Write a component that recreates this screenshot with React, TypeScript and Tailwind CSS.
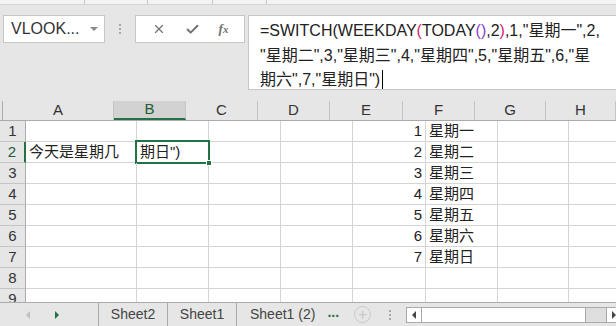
import { X, Check } from 'lucide-react';

const font = { fontFamily: '"Liberation Sans", "Noto Sans CJK SC", sans-serif' };

const cols = [
  { key: 'A', w: 'w-[111px]' },
  { key: 'B', w: 'w-[72px]' },
  { key: 'C', w: 'w-[72px]' },
  { key: 'D', w: 'w-[72px]' },
  { key: 'E', w: 'w-[73px]' },
  { key: 'F', w: 'w-[72px]' },
  { key: 'G', w: 'w-[71px]' },
  { key: 'H', w: 'w-[70px]' },
];

const days = ['星期一', '星期二', '星期三', '星期四', '星期五', '星期六', '星期日'];

function cellContent(row: number, col: string) {
  if (row === 2 && col === 'A') return <span className="pl-[3px]">今天是星期几</span>;
  if (row >= 1 && row <= 7 && col === 'E') return <span className="ml-auto pr-[3px]">{row}</span>;
  if (row >= 1 && row <= 7 && col === 'F') return <span className="pl-[3px]">{days[row - 1]}</span>;
  return null;
}

export default function App() {
  const rows = [1, 2, 3, 4, 5, 6, 7, 8, 9];
  return (
    <div className="w-[616px] h-[326px] overflow-hidden bg-[#e6e6e6] flex flex-col text-[#222]" style={font}>
      {/* ribbon edge */}
      <div className="h-[5px] bg-[#f3f3f3] border-b border-[#d6d6d6] flex shrink-0">
        <div className="w-[85px] border-r border-[#c8c8c8]" />
        <div className="w-[63px] border-r border-[#c8c8c8]" />
        <div className="w-[65px] border-r border-[#c8c8c8]" />
        <div className="w-[54px] border-r border-[#c8c8c8]" />
      </div>

      {/* formula row */}
      <div className="flex items-start pt-[10px] shrink-0 h-[96px]">
        <div className="ml-[3px] w-[102px] h-[28px] bg-white border border-[#c6c6c6] flex items-center pl-[7px] pr-[6px]">
          <span className="text-[16px] text-[#333] flex-1">VLOOK...</span>
          <span className="w-0 h-0 border-l-[4px] border-r-[4px] border-t-[4px] border-l-transparent border-r-transparent border-t-[#8a8a8a]" />
        </div>
        <div className="w-[30px] h-[28px] flex flex-col items-center justify-center gap-[2px]">
          <span className="w-[2px] h-[2px] bg-[#a8a8a8]" />
          <span className="w-[2px] h-[2px] bg-[#a8a8a8]" />
          <span className="w-[2px] h-[2px] bg-[#a8a8a8]" />
        </div>
        <div className="w-[110px] h-[28px] bg-white border border-[#c6c6c6] flex items-center justify-around px-[6px] text-[#707070]">
          <X className="w-[14px] h-[14px]" strokeWidth={2} />
          <Check className="w-[15px] h-[15px]" strokeWidth={3} />
          <span className="text-[13px] italic font-bold text-[#707070]" style={{ fontFamily: '"Liberation Serif", serif' }}>
            f<span className="text-[11px]">x</span>
          </span>
        </div>
        <div className="ml-[3px] flex-1 h-[75px] bg-white border border-[#c6c6c6] border-r-0 pl-[11px] pt-[3px] text-[16px] leading-[24.5px] text-[#222] whitespace-nowrap overflow-hidden">
          <div>
            =SWITCH(WEEKDAY<span className="text-[#d6246e]">(</span>TODAY<span className="text-[#8a3fc7]">()</span>,2<span className="text-[#d6246e]">)</span>,1,"星期一",2,
          </div>
          <div>"星期二",3,"星期三",4,"星期四",5,"星期五",6,"星</div>
          <div className="flex items-center">
            期六",7,"星期日")<span className="inline-block w-[1px] h-[20px] bg-black ml-[2px]" />
          </div>
        </div>
      </div>

      {/* grid */}
      <div className="flex-1 bg-white flex flex-col overflow-hidden">
        <div className="flex h-[20px] shrink-0 bg-[#e6e6e6] border-b border-[#ababab]">
          <div className="w-[26px] border-r border-[#ababab] relative overflow-hidden">
            <div className="absolute right-[3px] bottom-[3px] w-0 h-0" style={{ borderBottom: '13px solid #b6b6b6', borderLeft: '13px solid transparent' }} />
          </div>
          {cols.map(c => (
            <div
              key={c.key}
              className={`${c.w} shrink-0 flex items-center justify-center text-[15px] border-r ${
                c.key === 'B' ? 'bg-[#d2d2d2] border-b-2 border-b-[#217346] border-r-[#c4c4c4] text-[#1d5c38]' : 'border-[#c4c4c4] text-[#333]'
              }`}
            >
              {c.key}
            </div>
          ))}
        </div>
        {rows.map(r => (
          <div key={r} className="flex h-[21px] shrink-0">
            <div
              className={`w-[26px] shrink-0 bg-[#e6e6e6] border-b border-[#c4c4c4] flex items-center justify-center text-[15px] ${
                r === 2 ? 'bg-[#d2d2d2] border-r-2 border-r-[#217346] text-[#1d5c38]' : 'border-r border-r-[#ababab] text-[#333]'
              }`}
            >
              {r}
            </div>
            {cols.map(c => {
              const selected = r === 2 && c.key === 'B';
              return (
                <div
                  key={c.key}
                  className={`${c.w} shrink-0 flex items-center text-[15px] border-r border-b border-[#d4d4d4] relative whitespace-nowrap ${selected ? 'overflow-visible' : 'overflow-hidden'}`}
                >
                  {selected ? (
                    <>
                      <div className="absolute -left-[2px] -top-[2px] w-[75px] h-[24px] border-2 border-[#217346]" />
                      <div className="absolute -right-[4px] -bottom-[4px] w-[6px] h-[6px] bg-[#217346] border border-white z-10" />
                      <span className="pl-[3px]">期日")</span>
                    </>
                  ) : (
                    cellContent(r, c.key)
                  )}
                </div>
              );
            })}
          </div>
        ))}
      </div>

      {/* sheet tabs */}
      <div className="h-[24px] shrink-0 bg-[#e6e6e6] border-t border-[#ababab] flex items-center text-[14px] text-[#444]">
        <div className="w-[98px] h-full flex items-center">
          <span className="ml-[26px] w-0 h-0 border-t-[4px] border-b-[4px] border-r-[4px] border-t-transparent border-b-transparent border-r-[#c0c0c0]" />
          <span className="ml-[25px] w-0 h-0 border-t-[4px] border-b-[4px] border-l-[4px] border-t-transparent border-b-transparent border-l-[#217346]" />
        </div>
        <div className="w-[69px] h-full border-l border-[#a9a9a9] flex items-center justify-center">Sheet2</div>
        <div className="w-[69px] h-full border-l border-[#a9a9a9] flex items-center justify-center">Sheet1</div>
        <div className="h-full border-l border-[#a9a9a9] pl-[13px] pr-[12px] flex items-center">Sheet1 (2)</div>
        <span className="text-[#217346] font-bold text-[14px] -mt-[4px]">...</span>
        <div className="ml-[15px] w-[17px] h-[17px] rounded-full border border-[#c8c8c8] flex items-center justify-center text-[#c8c8c8] text-[16px] leading-none">+</div>
        <div className="ml-[18px] flex flex-col gap-[2px]">
          <span className="w-[2px] h-[2px] bg-[#a8a8a8]" />
          <span className="w-[2px] h-[2px] bg-[#a8a8a8]" />
          <span className="w-[2px] h-[2px] bg-[#a8a8a8]" />
        </div>
        <div className="ml-[15px] flex-1 h-[16px] flex bg-[#dedede] border border-[#a9a9a9] border-r-0">
          <div className="w-[15px] flex items-center justify-center bg-white border-r border-[#a9a9a9]">
            <span className="w-0 h-0 border-t-[4px] border-b-[4px] border-r-[4px] border-t-transparent border-b-transparent border-r-[#444]" />
          </div>
          <div className="w-[164px] bg-white border-r border-[#a9a9a9]" />
          <div className="flex-1" />
          <div className="w-[10px] flex items-center justify-end bg-white border-l border-[#a9a9a9]">
            <span className="w-0 h-0 border-t-[4px] border-b-[4px] border-l-[4px] border-t-transparent border-b-transparent border-l-[#444]" />
          </div>
        </div>
      </div>
    </div>
  );
}
